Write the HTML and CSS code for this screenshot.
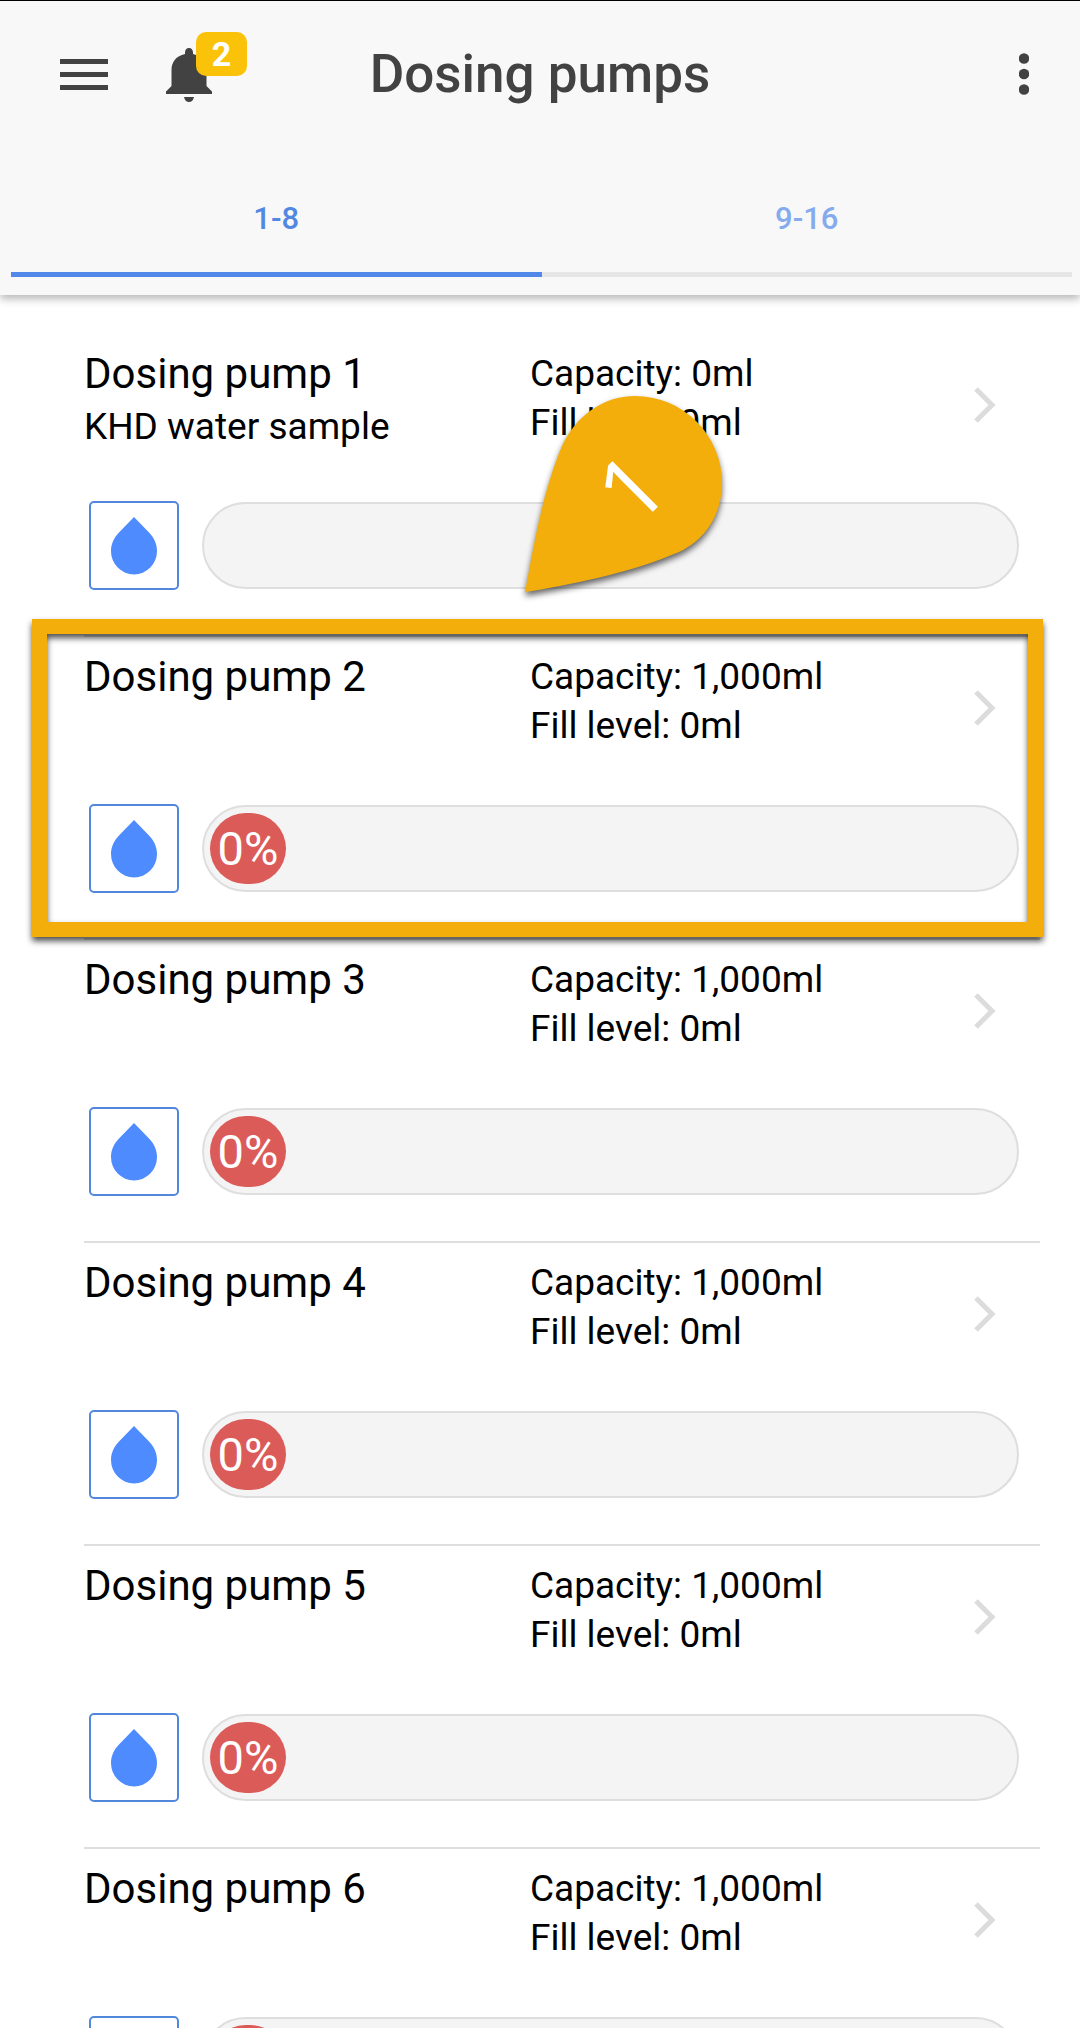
FILE: index.html
```html
<!DOCTYPE html>
<html lang="en">
<head>
<meta charset="utf-8">
<meta name="viewport" content="width=device-width, initial-scale=1">
<title>Dosing pumps</title>
<link rel="stylesheet" href="styles.css">
</head>
<body>
<svg class="sprite">
  <symbol id="drop" viewBox="0 0 46 58"><path d="M23 0L38 15.500C43 20.500 46 27 46 34A23 23.500 0 0 1 0 34C0 27 3 20.500 8 15.500Z"/></symbol>
  <symbol id="chevron" viewBox="0 0 22 36"><path d="M2 2L18 18L2 34" fill="none" stroke="currentColor" stroke-width="5"/></symbol>
</svg>
<header class="header">
  <div class="toolbar">
    <div class="toolbar-start">
      <button class="icon-button" aria-label="Menu">
        <svg width="48" height="32" viewBox="0 0 48 32"><path d="M0 0h48v5H0zM0 13h48v5H0zM0 26h48v5H0z"/></svg>
      </button>
      <button class="icon-button bell" aria-label="Notifications">
        <svg width="46" height="54" viewBox="0 0 46 54"><path d="M23 0C20.500 0 19 2 19 4.500V6C10 8 5.500 14 5.500 22V38L0 43.500V46H46V43.500L40.500 38V22C40.500 14 36 8 27 6V4.500C27 2 25.500 0 23 0ZM18 49C18.500 52 20.500 54 23 54S27.500 52 28 49Z"/></svg>
        <span class="badge">2</span>
      </button>
    </div>
    <h1 class="title">Dosing pumps</h1>
    <div class="toolbar-end">
      <button class="icon-button" aria-label="More">
        <svg width="10" height="42" viewBox="0 0 10 42"><circle cx="5" cy="5.500" r="5.200"/><circle cx="5" cy="21" r="5.200"/><circle cx="5" cy="36.500" r="5.200"/></svg>
      </button>
    </div>
  </div>
  <nav class="tabs">
    <button class="tab active">1-8</button>
    <button class="tab">9-16</button>
  </nav>
</header>
<main>
  <ul class="pumps">
    <li class="pump">
      <a class="info" href="#pump1">
        <div class="name"><h2>Dosing pump 1</h2><p>KHD water sample</p></div>
        <div class="level"><p>Capacity: 0ml</p><p>Fill level: 0ml</p></div>
        <svg class="chevron"><use href="#chevron"/></svg>
      </a>
      <div class="fill">
        <button class="dose" aria-label="Dose pump 1"><svg><use href="#drop"/></svg></button>
        <div class="bar"></div>
      </div>
    </li>
    <li class="pump">
      <a class="info" href="#pump2">
        <div class="name"><h2>Dosing pump 2</h2></div>
        <div class="level"><p>Capacity: 1,000ml</p><p>Fill level: 0ml</p></div>
        <svg class="chevron"><use href="#chevron"/></svg>
      </a>
      <div class="fill">
        <button class="dose" aria-label="Dose pump 2"><svg><use href="#drop"/></svg></button>
        <div class="bar"><span class="percent">0%</span></div>
      </div>
      <div class="highlight"></div>
      <div class="marker">
        <svg width="198" height="197" viewBox="0 0 198 197"><path d="M0 196C9 149 17 98 37 50C51 20 78 0 110 0A87 87 0 0 1 197 87C197 119 180 144 154 156C105 177 45 189 0 196Z"/></svg>
        <span class="marker-label">1</span>
      </div>
    </li>
    <li class="pump">
      <a class="info" href="#pump3">
        <div class="name"><h2>Dosing pump 3</h2></div>
        <div class="level"><p>Capacity: 1,000ml</p><p>Fill level: 0ml</p></div>
        <svg class="chevron"><use href="#chevron"/></svg>
      </a>
      <div class="fill">
        <button class="dose" aria-label="Dose pump 3"><svg><use href="#drop"/></svg></button>
        <div class="bar"><span class="percent">0%</span></div>
      </div>
    </li>
    <li class="pump">
      <a class="info" href="#pump4">
        <div class="name"><h2>Dosing pump 4</h2></div>
        <div class="level"><p>Capacity: 1,000ml</p><p>Fill level: 0ml</p></div>
        <svg class="chevron"><use href="#chevron"/></svg>
      </a>
      <div class="fill">
        <button class="dose" aria-label="Dose pump 4"><svg><use href="#drop"/></svg></button>
        <div class="bar"><span class="percent">0%</span></div>
      </div>
    </li>
    <li class="pump">
      <a class="info" href="#pump5">
        <div class="name"><h2>Dosing pump 5</h2></div>
        <div class="level"><p>Capacity: 1,000ml</p><p>Fill level: 0ml</p></div>
        <svg class="chevron"><use href="#chevron"/></svg>
      </a>
      <div class="fill">
        <button class="dose" aria-label="Dose pump 5"><svg><use href="#drop"/></svg></button>
        <div class="bar"><span class="percent">0%</span></div>
      </div>
    </li>
    <li class="pump">
      <a class="info" href="#pump6">
        <div class="name"><h2>Dosing pump 6</h2></div>
        <div class="level"><p>Capacity: 1,000ml</p><p>Fill level: 0ml</p></div>
        <svg class="chevron"><use href="#chevron"/></svg>
      </a>
      <div class="fill">
        <button class="dose" aria-label="Dose pump 6"><svg><use href="#drop"/></svg></button>
        <div class="bar"><span class="percent">0%</span></div>
      </div>
    </li>
  </ul>
</main>
</body>
</html>
```

FILE: styles.css
```css
* {
  box-sizing: border-box;
  margin: 0;
  padding: 0;
}

html,
body {
  height: 100%;
}

body {
  display: flex;
  flex-direction: column;
  background: #fff;
  color: #000;
  font-family: Roboto, sans-serif;
}

button {
  border: 0;
  background: none;
  font-family: inherit;
}

svg {
  display: block;
}

.sprite {
  display: none;
}

/* Header */
.header {
  position: relative;
  z-index: 1;
  flex: none;
  padding-bottom: 18px;
  border-top: 1px solid #000;
  background: #f8f8f8;
  box-shadow: 0 4px 8px rgba(0, 0, 0, 0.28);
}

.toolbar {
  display: grid;
  grid-template-columns: 1fr auto 1fr;
  align-items: center;
  height: 146px;
  padding: 0 51px;
}

.toolbar-start {
  display: flex;
  align-items: center;
  gap: 58px;
  padding: 2px 0 0 9px;
}

.toolbar-end {
  display: flex;
  justify-content: flex-end;
}

.icon-button {
  fill: #424242;
}

.bell {
  position: relative;
}

.badge {
  position: absolute;
  left: 30px;
  top: -16px;
  width: 51px;
  height: 44px;
  border-radius: 10px;
  background: #fbc20a;
  color: #fff;
  font-size: 34px;
  font-weight: 700;
  line-height: 44px;
  text-align: center;
}

.title {
  color: #424242;
  font-size: 53px;
  font-weight: 500;
  line-height: 60px;
}

.tabs {
  display: grid;
  grid-template-columns: 1fr 1fr;
  padding: 0 8px 0 11px;
}

.tab {
  height: 130px;
  padding-top: 18px;
  border-bottom: 5px solid #e6e6e6;
  color: #85abee;
  font-size: 31px;
  font-weight: 500;
  line-height: 36px;
}

.tab.active {
  border-color: #5288ea;
  color: #5288e2;
}

/* Pump list */
main {
  flex: 1;
  min-height: 0;
  overflow-y: auto;
  scrollbar-width: none;
}

.pumps {
  padding: 39px 40px 0 84px;
  list-style: none;
}

.pump {
  position: relative;
  height: 303px;
  padding-top: 15px;
  border-bottom: 2px solid #dedede;
}

.info {
  display: grid;
  grid-template-columns: 446px 1fr 22px;
  height: 152px;
  padding-right: 44px;
  color: inherit;
  text-decoration: none;
}

.name h2 {
  margin-bottom: 3px;
  font-size: 42px;
  font-weight: 400;
  line-height: 50px;
}

.name p,
.level p {
  font-size: 37px;
  line-height: 49px;
}

.chevron {
  width: 22px;
  height: 36px;
  margin-top: 38px;
  color: #dcdcdc;
}

.fill {
  display: flex;
  align-items: center;
  gap: 23px;
  padding: 0 21px 0 5px;
}

.dose {
  display: flex;
  justify-content: center;
  width: 90px;
  height: 89px;
  padding-top: 14px;
  border: 2px solid #5288dc;
  border-radius: 5px;
}

.dose svg {
  width: 46px;
  height: 58px;
  fill: #4d8bff;
}

.bar {
  flex: 1;
  height: 87px;
  padding: 6px;
  border: 2px solid #dedede;
  border-radius: 44px;
  background: #f4f4f4;
}

.percent {
  display: block;
  width: 76px;
  height: 71px;
  border-radius: 38px;
  background: #db5b59;
  color: #fff;
  font-size: 47px;
  line-height: 71px;
  text-align: center;
}

/* Tutorial overlay on the selected pump */
.highlight {
  position: absolute;
  inset: -18px -3px 1px -52px;
  border: 15px solid #f3ae0b;
  filter: drop-shadow(0 4px 3px rgba(0, 0, 0, 0.7));
  pointer-events: none;
}

.marker {
  position: absolute;
  left: 441px;
  top: -241px;
  filter: drop-shadow(0 4px 3px rgba(0, 0, 0, 0.6));
}

.marker svg {
  fill: #f3ae0b;
}

.marker-label {
  position: absolute;
  left: 54px;
  top: 40px;
  width: 100px;
  color: #fff;
  font-family: "Open Sans", sans-serif;
  font-size: 90px;
  font-weight: 500;
  line-height: 100px;
  text-align: center;
  transform: rotate(-45deg);
}
```
